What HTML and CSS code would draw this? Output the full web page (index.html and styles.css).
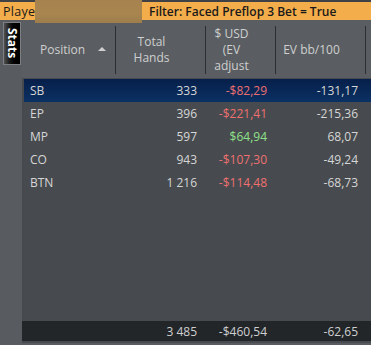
FILE: index.html
```html
<!DOCTYPE html>
<html>
<head>
<meta charset="utf-8">
<link rel="stylesheet" href="styles.css">
</head>
<body>
<div class="topbar">
  <span class="player">Playe</span>
  <span class="blur"></span>
  <span class="filter">Filter: Faced Preflop 3 Bet = True</span>
</div>
<div class="main">
  <div class="side">
    <div class="tab">Stats</div>
  </div>
  <div class="grid">
    <div class="head">
      <div class="hc pos"><span>Position</span><span class="arrow"></span></div>
      <div class="hc">Total<br>Hands</div>
      <div class="hc">$ USD<br>(EV<br>adjust</div>
      <div class="hc">EV bb/100</div>
      <div class="hc last"></div>
    </div>
    <div class="body">
      <div class="row sel"><span class="c1">SB</span><span>333</span><span class="neg">-$82,29</span><span>-131,17</span><span></span></div>
      <div class="row"><span class="c1">EP</span><span>396</span><span class="neg">-$221,41</span><span>-215,36</span><span></span></div>
      <div class="row"><span class="c1">MP</span><span>597</span><span class="pos-v">$64,94</span><span>68,07</span><span></span></div>
      <div class="row"><span class="c1">CO</span><span>943</span><span class="neg">-$107,30</span><span>-49,24</span><span></span></div>
      <div class="row"><span class="c1">BTN</span><span>1 216</span><span class="neg">-$114,48</span><span>-68,73</span><span></span></div>
    </div>
    <div class="foot">
      <span class="c1"></span><span>3 485</span><span>-$460,54</span><span>-62,65</span><span></span>
    </div>
  </div>
</div>
</body>
</html>
```
FILE: styles.css
```css
* { box-sizing: border-box; }
html, body { margin: 0; padding: 0; }
body {
  width: 371px;
  height: 345px;
  overflow: hidden;
  background: #585c60;
  font-family: "Open Sans", "Noto Sans", sans-serif;
  font-size: 12px;
  color: #d6d6d6;
}
.topbar {
  height: 20px;
  border-top: 2px solid #3e4246;
  background: #f3ad4b;
  display: flex;
  align-items: center;
  color: #1a1a1a;
  position: relative;
  z-index: 2;
}
.player {
  width: 35px;
  padding-left: 3px;
  font-size: 12.5px;
  letter-spacing: 0.3px;
}
.blur {
  width: 107px;
  height: 23px;
  align-self: flex-start;
  margin-top: -2px;
  background: linear-gradient(180deg, #a6824f 0%, #a9864f 60%, #9d7d4c 100%);
}
.filter {
  margin-left: 7px;
  font-weight: 600;
  font-size: 12px;
}
.main {
  display: flex;
  height: 323px;
}
.side {
  width: 22px;
  flex: none;
  padding: 2px 0 0 3px;
}
.tab {
  width: 18px;
  height: 43px;
  border: 1px solid #7c8084;
  background: linear-gradient(90deg, #505050 0%, #1a1a1a 35%, #000 60%, #000 100%);
  color: #fff;
  font-weight: 700;
  font-size: 12px;
  writing-mode: vertical-rl;
  display: flex;
  align-items: center;
  justify-content: center;
  line-height: 16px;
}
.grid {
  flex: 1;
  display: flex;
  flex-direction: column;
  background: #474b4f;
}
.head {
  height: 58px;
  background: #5a5e62;
  display: grid;
  grid-template-columns: 94px 90px 70px 90px 1fr;
  padding: 6px 0 4px;
  color: #cfcfcf;
}
.hc {
  border-right: 1px solid #2c2f32;
  display: flex;
  align-items: center;
  justify-content: center;
  text-align: center;
  padding-right: 18px;
  line-height: 16px;
}
.hc.last { border-right: none; }
.hc.pos {
  justify-content: space-between;
  padding: 0 9px 0 18px;
}
.arrow {
  width: 0;
  height: 0;
  border-left: 4px solid transparent;
  border-right: 4px solid transparent;
  border-bottom: 4px solid #d0d0d0;
  margin-top: -2px;
}
.body {
  flex: 1;
  padding: 1px 0 0 2px;
}
.row, .foot {
  display: grid;
  grid-template-columns: 92px 90px 70px 90px 1fr;
  height: 23px;
  align-items: center;
  text-align: right;
}
.row span, .foot span { padding-right: 9px; }
.row span:nth-child(4), .foot span:nth-child(4) { padding-right: 8px; }
.row .c1 { text-align: left; padding-left: 6px; }
.sel {
  background: linear-gradient(180deg, #071f4a 0%, #0b3163 100%);
}
.neg { color: #ee7070; }
.pos-v { color: #90e08a; }
.foot {
  height: 20px;
  background: #222629;
  margin-bottom: 2px;
  padding-left: 2px;
  color: #cfcfcf;
}
```
